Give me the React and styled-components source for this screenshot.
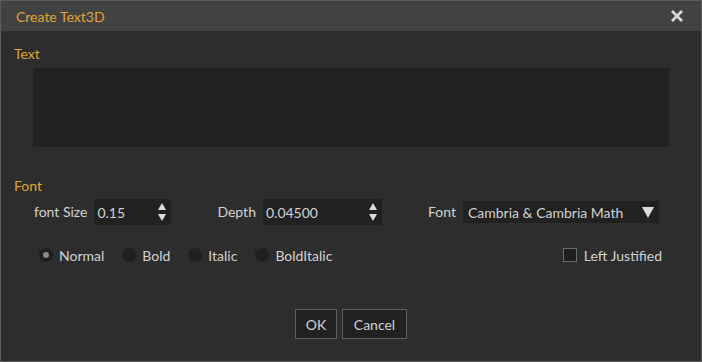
import React from "react";
import styled, { createGlobalStyle } from "styled-components";

const GlobalStyle = createGlobalStyle`
  html, body {
    margin: 0;
    padding: 0;
    background: #2d2d2d;
  }
  body {
    font-family: Lato, "Noto Sans", sans-serif;
    font-size: 14px;
  }
`;

const orange = "#e2a438";
const label = "#d2d2d2";
const field = "#212121";

// 다이얼로그 전체 틀
const Dialog = styled.div`
  width: 702px;
  height: 362px;
  box-sizing: border-box;
  border: 1px solid #5b5b5b;
  background: #2d2d2d;
  display: flex;
  flex-direction: column;
`;

const TitleBar = styled.div`
  height: 30px;
  background: #424242;
  display: flex;
  align-items: center;
  justify-content: space-between;
  padding: 0 17px 0 15px;
  color: ${orange};
`;

const Close = styled.svg`
  width: 14px;
  height: 14px;
  display: block;
`;

const Body = styled.div`
  padding: 0 13px;
  display: flex;
  flex-direction: column;
`;

const Section = styled.div`
  color: ${orange};
  line-height: 18px;
  margin-top: ${(p) => p.$top}px;
`;

const TextBox = styled.div`
  margin: 5px 0 0 19px;
  width: 636px;
  height: 79px;
  background: ${field};
`;

const FieldRow = styled.div`
  display: flex;
  align-items: center;
  height: 26px;
  margin-top: 4px;
  padding-left: 20px;
  gap: 46px;
`;

const Group = styled.div`
  display: flex;
  align-items: center;
  gap: 7px;
`;

const Label = styled.span`
  color: ${label};
  line-height: 18px;
  white-space: nowrap;
`;

const Spin = styled.div`
  width: ${(p) => p.$w}px;
  height: 26px;
  background: ${field};
  display: flex;
  align-items: center;
  justify-content: space-between;
  box-sizing: border-box;
  padding: 0 5px 0 3px;
  color: ${label};
`;

const Arrows = styled.div`
  display: flex;
  flex-direction: column;
  gap: 4px;
`;

const Tri = styled.div`
  width: 0;
  height: 0;
  border-left: 4px solid transparent;
  border-right: 4px solid transparent;
  ${(p) => (p.$up ? "border-bottom" : "border-top")}: 7px solid #dcdcdc;
`;

const Select = styled.div`
  width: 196px;
  height: 22px;
  background: ${field};
  display: flex;
  align-items: center;
  justify-content: space-between;
  box-sizing: border-box;
  padding: 0 5px 0 5px;
  color: ${label};
`;

const BigTri = styled.div`
  width: 0;
  height: 0;
  border-left: 6px solid transparent;
  border-right: 6px solid transparent;
  border-top: 11px solid #dcdcdc;
`;

const OptionRow = styled.div`
  display: flex;
  align-items: center;
  height: 18px;
  margin-top: 21px;
  padding: 0 26px 0 25px;
  gap: 18px;
`;

const Radio = styled.label`
  display: flex;
  align-items: center;
  gap: 6px;
  color: ${label};
`;

const Dot = styled.span`
  width: 14px;
  height: 14px;
  border-radius: 50%;
  background: #1f1f1f;
  display: flex;
  align-items: center;
  justify-content: center;
  &::after {
    content: "";
    width: 6px;
    height: 6px;
    border-radius: 50%;
    background: ${(p) => (p.$on ? "#8a8a8a" : "transparent")};
  }
`;

const Check = styled.label`
  margin-left: auto;
  display: flex;
  align-items: center;
  gap: 7px;
  color: ${label};
`;

const Box = styled.span`
  width: 14px;
  height: 14px;
  box-sizing: border-box;
  border: 1px solid #6a6a6a;
  background: #1e1e1e;
`;

const Buttons = styled.div`
  display: flex;
  justify-content: center;
  gap: 5px;
  margin-top: 45px;
`;

const Button = styled.button`
  width: ${(p) => p.$w}px;
  height: 30px;
  padding: 0;
  background: ${field};
  border: 1px solid #5e5e5e;
  color: ${label};
  font: inherit;
  cursor: pointer;
`;

function Spinner({ value, width }) {
  return (
    <Spin $w={width}>
      <span>{value}</span>
      <Arrows>
        <Tri $up />
        <Tri />
      </Arrows>
    </Spin>
  );
}

export default function App() {
  const styles = ["Normal", "Bold", "Italic", "BoldItalic"];

  return (
    <>
      <GlobalStyle />
      <Dialog>
        <TitleBar>
          <span>Create Text3D</span>
          <Close viewBox="0 0 14 14">
            <path d="M2 2 L12 12 M12 2 L2 12" stroke="#dadada" strokeWidth="2.8" />
          </Close>
        </TitleBar>
        <Body>
          <Section $top={14}>Text</Section>
          <TextBox />
          <Section $top={30}>Font</Section>
          <FieldRow>
            <Group>
              <Label>font Size</Label>
              <Spinner value="0.15" width={77} />
            </Group>
            <Group>
              <Label>Depth</Label>
              <Spinner value="0.04500" width={119} />
            </Group>
            <Group>
              <Label>Font</Label>
              <Select>
                <span>Cambria &amp; Cambria Math</span>
                <BigTri />
              </Select>
            </Group>
          </FieldRow>
          <OptionRow>
            {styles.map((s, i) => (
              <Radio key={s}>
                <Dot $on={i === 0} />
                {s}
              </Radio>
            ))}
            <Check>
              <Box />
              Left Justified
            </Check>
          </OptionRow>
          <Buttons>
            <Button $w={42}>OK</Button>
            <Button $w={65}>Cancel</Button>
          </Buttons>
        </Body>
      </Dialog>
    </>
  );
}
